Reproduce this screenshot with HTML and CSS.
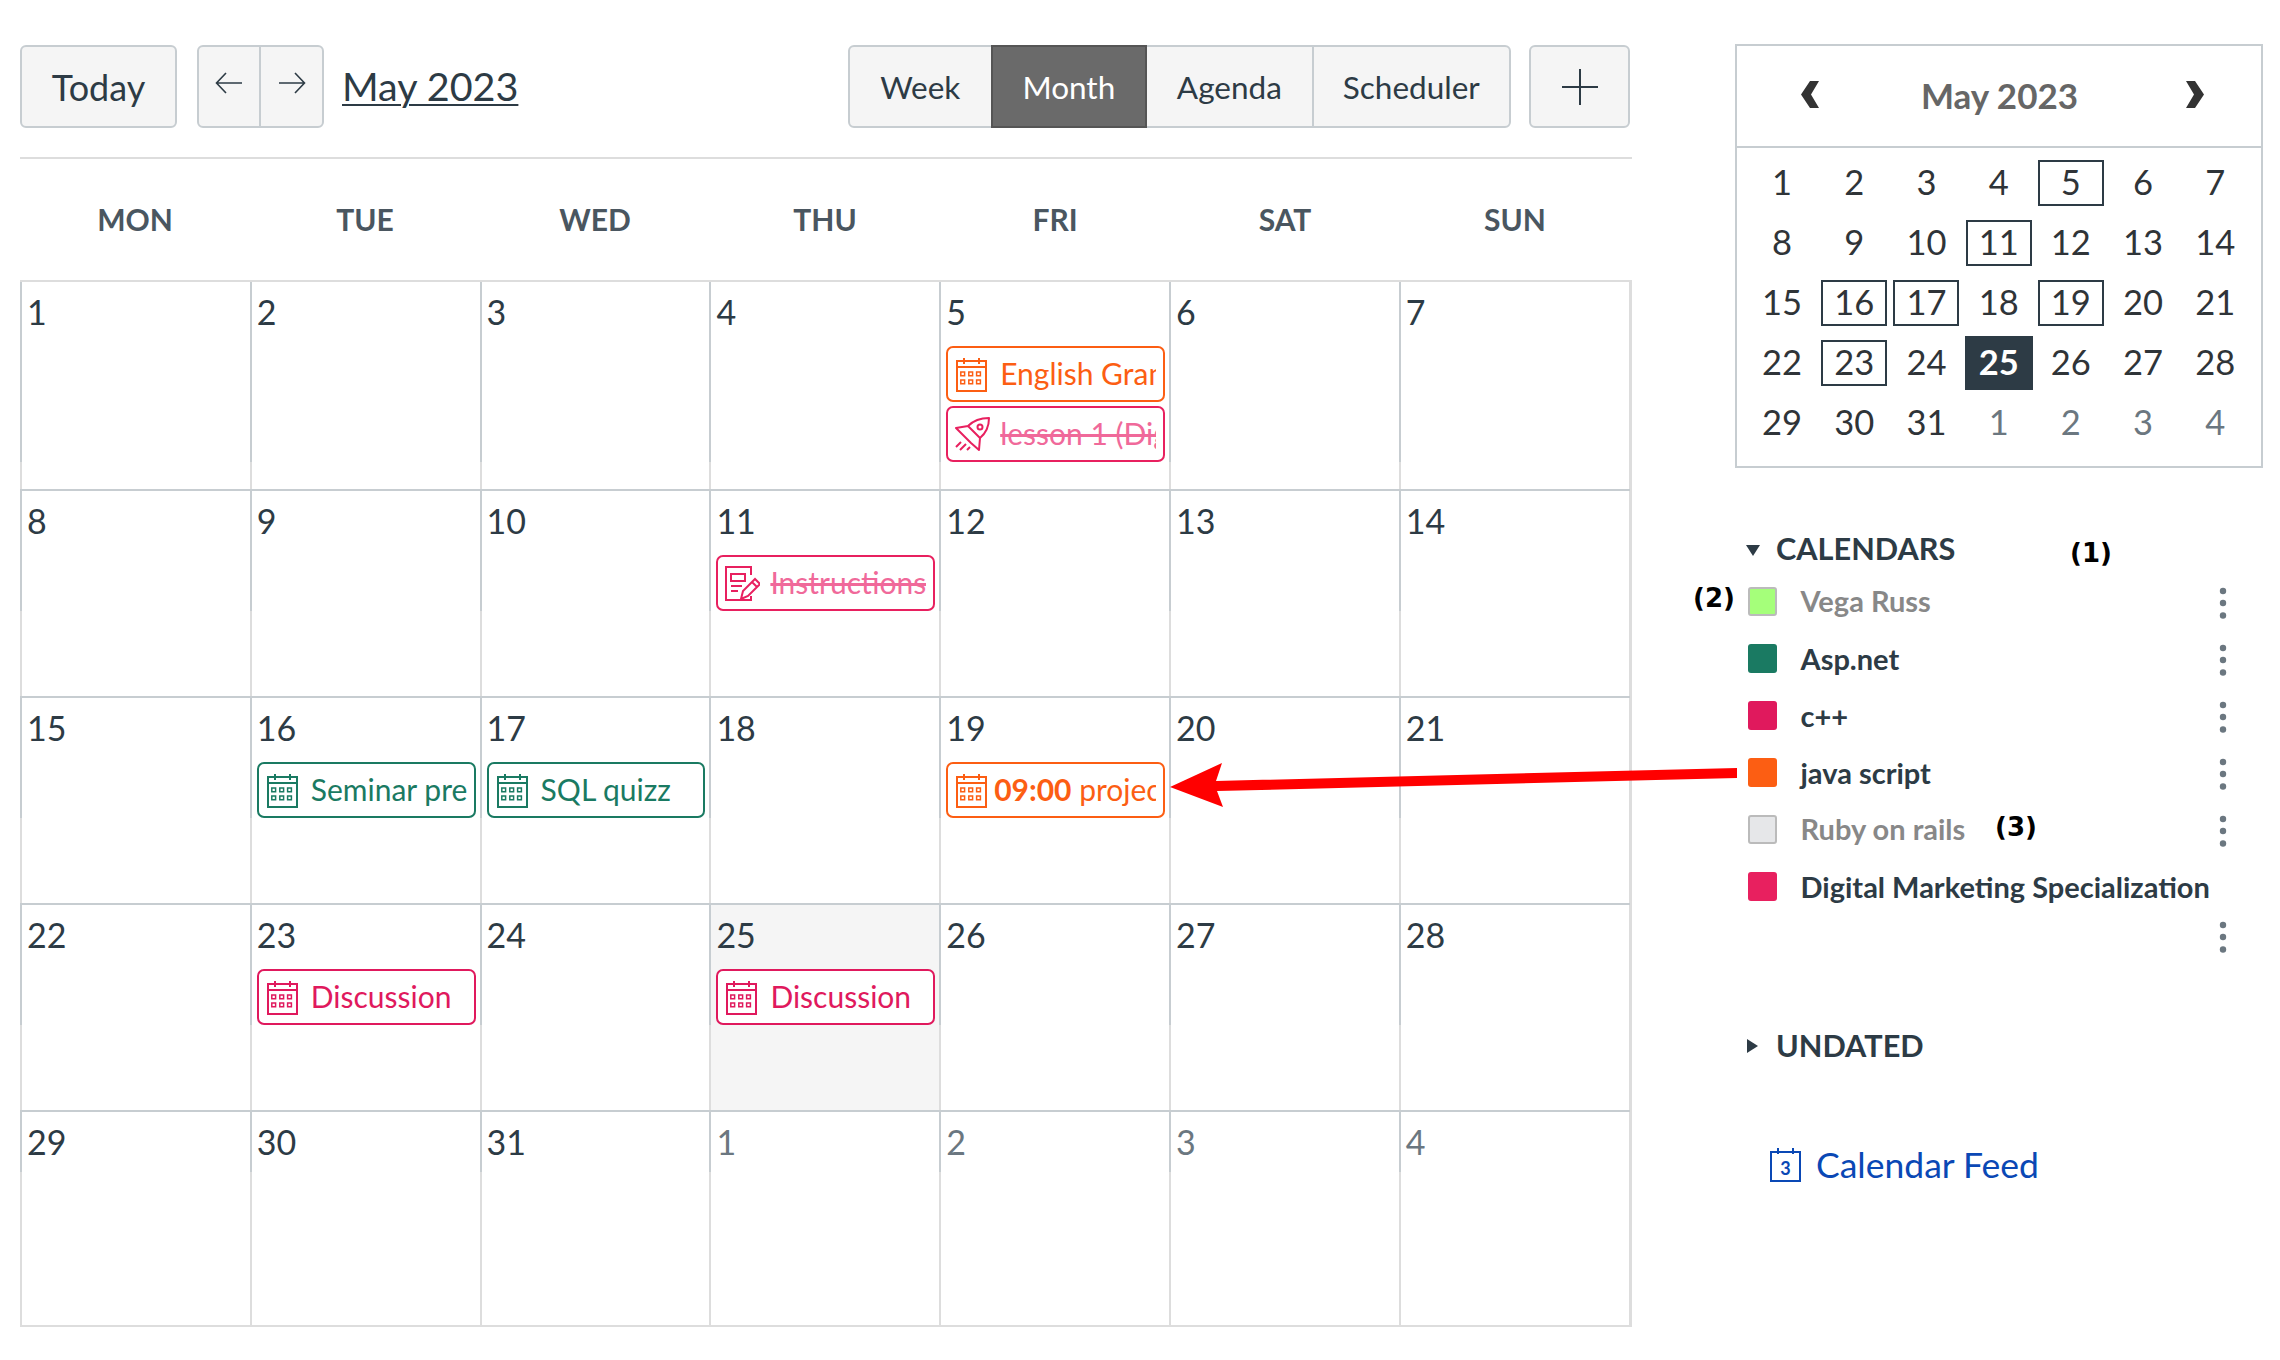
FILE: index.html
```html
<!DOCTYPE html>
<html lang="en">
<head>
    <meta charset="UTF-8">
    <title>Calendar</title>
    <link rel="stylesheet" href="styles.css">
</head>
<body>
    <svg class="icon-defs" width="0" height="0">
        <symbol id="ic-cal" viewBox="0 0 31 35">
            <path d="M1 4H30V34H1ZM1 10H30M8 1V7M23 1V7" fill="none" stroke="currentColor" stroke-width="2"/>
            <path d="M4.800 15h3.800v3.800H4.800ZM12.800 15h3.800v3.800h-3.800ZM20.600 15h3.800v3.800h-3.800ZM4.800 23h3.800v3.800H4.800ZM12.800 23h3.800v3.800h-3.800ZM20.600 23h3.800v3.800h-3.800Z" fill="none" stroke="currentColor" stroke-width="1.500"/>
        </symbol>
        <symbol id="ic-rocket" viewBox="0 0 35 35">
            <path d="M34 1C34 10 31 16 25 21L24 33L16 26L9 19L1 11L13 9C19 3 26 1 34 1ZM13 9L25 21M9 19L16 26" fill="none" stroke="currentColor" stroke-width="2" stroke-linejoin="round"/>
            <circle cx="25" cy="10" r="2.500" fill="none" stroke="currentColor" stroke-width="2"/>
            <path d="M1 30L6 25M5 33L11 27M12 33L15 30" fill="none" stroke="currentColor" stroke-width="2"/>
        </symbol>
        <symbol id="ic-quiz" viewBox="0 0 35 35">
            <path d="M26 9V1H1V34H26V30" fill="none" stroke="currentColor" stroke-width="2"/>
            <path d="M6 8H20V15H6ZM6 20H17M6 25H13" fill="none" stroke="currentColor" stroke-width="2"/>
            <path d="M16 33L18 25L30 13L35 18L23 30ZM27 16L32 21" fill="none" stroke="currentColor" stroke-width="2"/>
        </symbol>
        <symbol id="ic-kebab" viewBox="0 0 8 32">
            <circle cx="4" cy="4" r="3.200"/>
            <circle cx="4" cy="16" r="3.200"/>
            <circle cx="4" cy="28.500" r="3.200"/>
        </symbol>
    </svg>

    <div class="page">
        <main class="main-col">
            <div class="toolbar">
                <button class="btn btn-today">Today</button>
                <div class="btn-group nav-group">
                    <button class="btn-seg nav-seg">
                        <svg width="28" height="24" viewBox="0 0 28 24"><path d="M27 12H2M11 2L1.500 12L11 22" fill="none" stroke="currentColor" stroke-width="1.600"/></svg>
                    </button>
                    <button class="btn-seg nav-seg">
                        <svg width="28" height="24" viewBox="0 0 28 24"><path d="M1 12H26M17 2L26.500 12L17 22" fill="none" stroke="currentColor" stroke-width="1.600"/></svg>
                    </button>
                </div>
                <a class="cal-title" href="#">May 2023</a>
                <div class="btn-group view-group">
                    <button class="btn-seg view-week">Week</button>
                    <button class="btn-seg view-month active">Month</button>
                    <button class="btn-seg view-agenda">Agenda</button>
                    <button class="btn-seg view-sched">Scheduler</button>
                </div>
                <button class="btn btn-add">
                    <svg width="36" height="36" viewBox="0 0 36 36"><path d="M18 0V36M0 18H36" stroke="currentColor" stroke-width="2"/></svg>
                </button>
            </div>

            <div class="weekdays">
                <div>MON</div><div>TUE</div><div>WED</div><div>THU</div><div>FRI</div><div>SAT</div><div>SUN</div>
            </div>

            <div class="month">
                <div class="week week-first">
                    <div class="day"><div class="num">1</div></div>
                    <div class="day"><div class="num">2</div></div>
                    <div class="day"><div class="num">3</div></div>
                    <div class="day"><div class="num">4</div></div>
                    <div class="day">
                        <div class="num">5</div>
                        <div class="event orange"><svg class="ev-icon"><use href="#ic-cal"/></svg><span class="ev-text">English Grammar</span></div>
                        <div class="event rose done"><svg class="ev-icon ev-icon-wide"><use href="#ic-rocket"/></svg><span class="ev-text">lesson 1 (Digital)</span></div>
                    </div>
                    <div class="day"><div class="num">6</div></div>
                    <div class="day"><div class="num">7</div></div>
                </div>
                <div class="week">
                    <div class="day"><div class="num">8</div></div>
                    <div class="day"><div class="num">9</div></div>
                    <div class="day"><div class="num">10</div></div>
                    <div class="day">
                        <div class="num">11</div>
                        <div class="event rose done"><svg class="ev-icon ev-icon-wide"><use href="#ic-quiz"/></svg><span class="ev-text">Instructions</span></div>
                    </div>
                    <div class="day"><div class="num">12</div></div>
                    <div class="day"><div class="num">13</div></div>
                    <div class="day"><div class="num">14</div></div>
                </div>
                <div class="week">
                    <div class="day"><div class="num">15</div></div>
                    <div class="day">
                        <div class="num">16</div>
                        <div class="event green"><svg class="ev-icon"><use href="#ic-cal"/></svg><span class="ev-text">Seminar presentation</span></div>
                    </div>
                    <div class="day">
                        <div class="num">17</div>
                        <div class="event green"><svg class="ev-icon"><use href="#ic-cal"/></svg><span class="ev-text">SQL quizz</span></div>
                    </div>
                    <div class="day"><div class="num">18</div></div>
                    <div class="day">
                        <div class="num">19</div>
                        <div class="event orange"><svg class="ev-icon ev-icon-tight"><use href="#ic-cal"/></svg><span class="ev-text"><b>09:00</b> project</span></div>
                    </div>
                    <div class="day"><div class="num">20</div></div>
                    <div class="day"><div class="num">21</div></div>
                </div>
                <div class="week">
                    <div class="day"><div class="num">22</div></div>
                    <div class="day">
                        <div class="num">23</div>
                        <div class="event crimson"><svg class="ev-icon"><use href="#ic-cal"/></svg><span class="ev-text">Discussion</span></div>
                    </div>
                    <div class="day"><div class="num">24</div></div>
                    <div class="day today">
                        <div class="num">25</div>
                        <div class="event crimson"><svg class="ev-icon"><use href="#ic-cal"/></svg><span class="ev-text">Discussion</span></div>
                    </div>
                    <div class="day"><div class="num">26</div></div>
                    <div class="day"><div class="num">27</div></div>
                    <div class="day"><div class="num">28</div></div>
                    <div class="today-rest"></div>
                </div>
                <div class="week week-last">
                    <div class="day"><div class="num">29</div></div>
                    <div class="day"><div class="num">30</div></div>
                    <div class="day"><div class="num">31</div></div>
                    <div class="day other"><div class="num">1</div></div>
                    <div class="day other"><div class="num">2</div></div>
                    <div class="day other"><div class="num">3</div></div>
                    <div class="day other"><div class="num">4</div></div>
                </div>
            </div>
        </main>

        <aside class="sidebar">
            <div class="mini">
                <div class="mini-head">
                    <svg width="18" height="27" viewBox="0 0 18 27"><path d="M9 0H18L10 13.500L18 27H9L0 13.500Z" fill="#333"/></svg>
                    <span class="mini-title">May 2023</span>
                    <svg width="18" height="27" viewBox="0 0 18 27"><path d="M9 0H0L8 13.500L0 27H9L18 13.500Z" fill="#333"/></svg>
                </div>
                <div class="mini-grid">
                    <span>1</span><span>2</span><span>3</span><span>4</span><span class="has-ev">5</span><span>6</span><span>7</span>
                    <span>8</span><span>9</span><span>10</span><span class="has-ev">11</span><span>12</span><span>13</span><span>14</span>
                    <span>15</span><span class="has-ev">16</span><span class="has-ev">17</span><span>18</span><span class="has-ev">19</span><span>20</span><span>21</span>
                    <span>22</span><span class="has-ev">23</span><span>24</span><span class="cur">25</span><span>26</span><span>27</span><span>28</span>
                    <span>29</span><span>30</span><span>31</span><span class="other">1</span><span class="other">2</span><span class="other">3</span><span class="other">4</span>
                </div>
            </div>

            <section class="calendars">
                <h3 class="side-head"><i class="tri-down"></i>CALENDARS</h3>
                <span class="note note-1">(1)</span>
                <span class="note note-2">(2)</span>
                <span class="note note-3">(3)</span>
                <ul class="cal-list">
                    <li class="cal-row off">
                        <i class="swatch sw-vega"></i><span class="cal-name">Vega Russ</span>
                        <svg class="kebab"><use href="#ic-kebab"/></svg>
                    </li>
                    <li class="cal-row">
                        <i class="swatch sw-asp"></i><span class="cal-name">Asp.net</span>
                        <svg class="kebab"><use href="#ic-kebab"/></svg>
                    </li>
                    <li class="cal-row">
                        <i class="swatch sw-cpp"></i><span class="cal-name">c++</span>
                        <svg class="kebab"><use href="#ic-kebab"/></svg>
                    </li>
                    <li class="cal-row">
                        <i class="swatch sw-js"></i><span class="cal-name">java script</span>
                        <svg class="kebab"><use href="#ic-kebab"/></svg>
                    </li>
                    <li class="cal-row off">
                        <i class="swatch sw-ruby"></i><span class="cal-name">Ruby on rails</span>
                        <svg class="kebab"><use href="#ic-kebab"/></svg>
                    </li>
                    <li class="cal-row cal-row-wrap">
                        <i class="swatch sw-dm"></i><span class="cal-name">Digital Marketing Specialization</span>
                        <svg class="kebab"><use href="#ic-kebab"/></svg>
                    </li>
                </ul>
            </section>

            <h3 class="side-head undated"><i class="tri-right"></i>UNDATED</h3>

            <a class="feed" href="#">
                <svg width="31" height="35" viewBox="0 0 31 35">
                    <path d="M1 5H30V34H1ZM8 1V7M23 1V7" fill="none" stroke="currentColor" stroke-width="2"/>
                    <text x="15.500" y="28" text-anchor="middle" class="feed-num">3</text>
                </svg>
                <span>Calendar Feed</span>
            </a>
        </aside>
    </div>

    <svg class="pointer" width="2280" height="1360" viewBox="0 0 2280 1360">
        <polygon points="1170,787 1222,763 1216,781 1737,768 1737,778 1217,791 1223,807" fill="#ff0000"/>
    </svg>
</body>
</html>
```

FILE: styles.css
```css
:root {
    --ink: #2d3b45;
    --line: #c7cdd1;
    --line-light: #dddddd;
    --btn-bg: #f5f5f5;
    --orange: #fc5e13;
    --rose: #e8205f;
    --crimson: #e0195d;
    --green: #1a7a62;
}
* {
    box-sizing: border-box;
    margin: 0;
    padding: 0;
}
body {
    font-family: 'Lato', 'Liberation Sans', sans-serif;
    background: #ffffff;
    color: var(--ink);
    position: relative;
}
button {
    font-family: inherit;
    color: inherit;
}
.icon-defs {
    position: absolute;
}
.page {
    display: flex;
    padding: 44px 17px 0 20px;
    width: 2280px;
}
.main-col {
    width: 1612px;
}

/* toolbar */
.toolbar {
    display: flex;
    align-items: center;
    height: 84px;
    margin-bottom: 29px;
    padding: 1px 2px 0 0;
}
.btn {
    background: var(--btn-bg);
    border: 2px solid var(--line);
    border-radius: 6px;
    height: 83px;
}
.btn-today {
    width: 157px;
    font-size: 36px;
}
.btn-group {
    display: flex;
    height: 83px;
    background: var(--btn-bg);
    border: 2px solid var(--line);
    border-radius: 6px;
}
.btn-seg {
    background: none;
    border: none;
    border-left: 2px solid var(--line);
    height: 100%;
    font-size: 31.500px;
}
.btn-seg:first-child {
    border-left: none;
}
.nav-group {
    margin-left: 20px;
}
.nav-seg {
    width: 63px;
    display: flex;
    justify-content: center;
    padding-top: 24px;
}
.nav-seg:first-child {
    width: 60px;
}
.cal-title {
    margin: -2px 0 0 18px;
    font-size: 39.500px;
    color: var(--ink);
    text-decoration: underline;
    text-underline-offset: 3px;
    text-decoration-thickness: 2px;
}
.view-group {
    margin-left: auto;
    width: 663px;
}
.view-week {
    width: 141px;
}
.view-month {
    width: 157px;
}
.view-agenda {
    width: 165px;
    border-left: none;
}
.view-sched {
    width: 198px;
}
.view-month.active {
    background: #6a6a6a;
    color: #ffffff;
    border: 2px solid #555555;
    margin: -2px 0;
    height: 83px;
}
.btn-add {
    margin-left: 18px;
    width: 101px;
    display: flex;
    align-items: center;
    justify-content: center;
}
.weekdays {
    display: grid;
    grid-template-columns: repeat(7, 230px);
    border-top: 2px solid var(--line-light);
    height: 123px;
    padding-bottom: 1px;
    align-items: center;
    text-align: center;
    font-size: 30px;
    font-weight: 700;
    color: #4a5660;
}

/* month grid */
.month {
    width: 1612px;
    border-right: 2px solid var(--line-light);
    border-bottom: 2px solid var(--line-light);
}
.week {
    display: grid;
    grid-template-columns: repeat(7, 229.800px);
    grid-template-rows: auto 1fr;
    height: 207px;
    border-top: 2px solid var(--line);
    background: repeating-linear-gradient(to right, var(--line-light) 0 2px, transparent 2px 229.800px);
}
.week-first {
    height: 209px;
    border-top-color: var(--line-light);
}
.week-last {
    height: 215px;
}
.day {
    border-left: 2px solid var(--line);
    padding: 0 4px 0 5px;
}
.day.other .num {
    color: #6b7780;
}
.today {
    background: var(--btn-bg);
}
.today-rest {
    grid-column: 4;
    grid-row: 2;
    margin-left: 2px;
    background: var(--btn-bg);
}
.num {
    font-size: 34px;
    line-height: 60px;
    height: 60px;
}
.event {
    display: flex;
    align-items: center;
    height: 56px;
    margin-top: 4px;
    border: 2px solid currentColor;
    border-radius: 7px;
    background: #ffffff;
    padding: 0 7px 0 8px;
    overflow: hidden;
    white-space: nowrap;
    font-size: 30px;
}
.ev-icon {
    flex: none;
    width: 31px;
    height: 35px;
    margin-right: 13px;
}
.ev-icon-wide {
    width: 35px;
    margin: 0 10px 0 -1px;
}
.ev-icon-tight {
    margin-right: 7px;
}
.ev-text {
    overflow: hidden;
    flex: 1;
    margin-top: -2px;
}
.orange { color: var(--orange); }
.rose { color: var(--rose); }
.crimson { color: var(--crimson); }
.green { color: var(--green); }
.done .ev-text {
    color: #f0699a;
    text-decoration: line-through;
}

/* sidebar */
.sidebar {
    position: relative;
    width: 528px;
    margin-left: 103px;
}
.mini {
    border: 2px solid var(--line);
    height: 424px;
}
.mini-head {
    height: 102px;
    border-bottom: 2px solid var(--line);
    display: flex;
    align-items: center;
    justify-content: space-between;
    padding: 0 57px 3px 64px;
}
.mini-title {
    font-size: 35px;
    font-weight: 700;
    color: #666666;
    margin-right: 6px;
}
.mini-grid {
    display: grid;
    grid-template-columns: repeat(7, 72.200px);
    grid-auto-rows: 60px;
    padding: 5px 0 0 9px;
    font-size: 34.500px;
    color: #2f3438;
}
.mini-grid span {
    display: flex;
    align-items: center;
    justify-content: center;
    justify-self: center;
    width: 66px;
    height: 46px;
    padding-bottom: 3px;
    align-self: center;
}
.mini-grid .has-ev {
    border: 2px solid var(--ink);
}
.mini-grid .cur {
    width: 68px;
    height: 54px;
    background: var(--ink);
    color: #ffffff;
    font-weight: 700;
}
.mini-grid .other {
    color: #6b7780;
}
.calendars {
    margin-top: 62px;
}
.side-head {
    display: flex;
    align-items: center;
    height: 36px;
    font-size: 30.700px;
    font-weight: 700;
    color: var(--ink);
}
.tri-down {
    width: 0;
    height: 0;
    margin: 4px 16px 0 11px;
    border-left: 7px solid transparent;
    border-right: 7px solid transparent;
    border-top: 11px solid var(--ink);
}
.tri-right {
    width: 0;
    height: 0;
    margin: 2px 18px 0 12px;
    border-top: 7.500px solid transparent;
    border-bottom: 7.500px solid transparent;
    border-left: 11px solid var(--ink);
}
.note {
    position: absolute;
    font-family: 'DejaVu Sans', sans-serif;
    font-size: 26px;
    line-height: 36px;
    font-weight: 700;
    color: #000000;
}
.note-1 { left: 335px; top: 491px; }
.note-2 { left: -42px; top: 536px; }
.note-3 { left: 260px; top: 765px; }
.cal-list {
    list-style: none;
    margin-top: 21px;
}
.cal-row {
    display: flex;
    align-items: flex-start;
    height: 57px;
    padding-left: 13px;
    font-size: 29px;
    font-weight: 700;
}
.cal-row-wrap {
    height: 88px;
}
.swatch {
    flex: none;
    width: 29px;
    height: 29px;
    border-radius: 3px;
    margin-right: 23.500px;
}
.sw-vega { background: #a5ff7a; border: 2px solid #bbbbbb; }
.sw-asp { background: #1a7a62; }
.sw-cpp { background: #e0195d; }
.sw-js { background: #fc5e13; }
.sw-ruby { background: #e6e7e9; border: 2px solid #bbbbbb; }
.sw-dm { background: #e8205f; }
.cal-name {
    line-height: 29px;
    white-space: nowrap;
}
.off .cal-name {
    color: #888888;
    margin-top: -1px;
}
.kebab {
    position: absolute;
    left: 484px;
    width: 8px;
    height: 32px;
    fill: #6b7780;
}
.cal-row-wrap .kebab {
    margin-top: 49px;
}
.undated {
    margin-top: 67px;
}
.feed {
    display: flex;
    align-items: center;
    margin: 80px 0 0 35px;
    gap: 15px;
    font-size: 35.500px;
    color: #0a48b5;
    text-decoration: none;
}
.feed svg {
    flex: none;
}
.feed-num {
    font-size: 18px;
    font-weight: 700;
    fill: currentColor;
}

/* red annotation arrow, drawn over the page */
.pointer {
    position: absolute;
    left: 0;
    top: 0;
    pointer-events: none;
}
```
